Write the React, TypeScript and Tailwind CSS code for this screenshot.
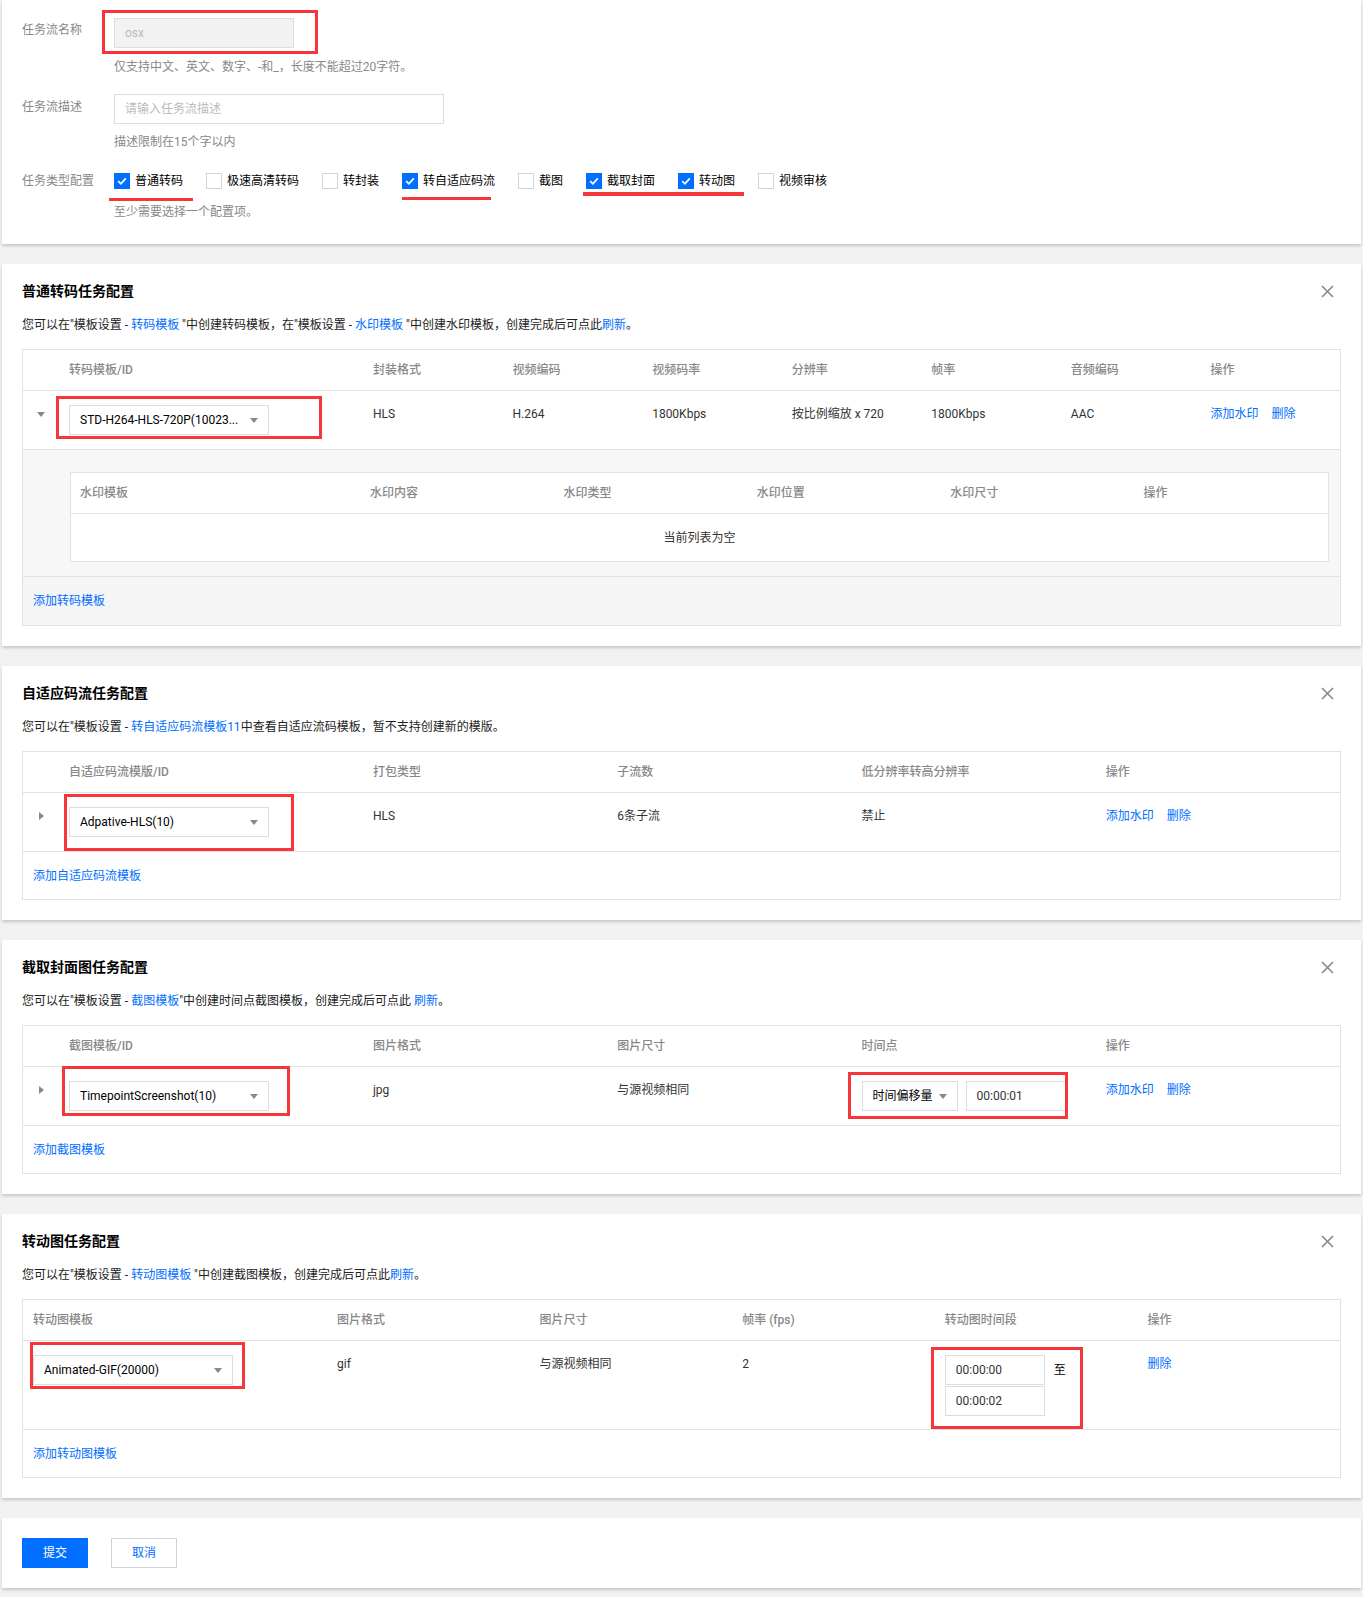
import React from "react";

// red annotation frame drawn over the form
function RedBox({ className }: { className: string }) {
  return <div className={"pointer-events-none absolute border-[3px] border-[#f5363b] " + className} />;
}

function Caret() {
  return (
    <svg width="8" height="5" viewBox="0 0 8 5" className="shrink-0">
      <polygon points="0,0 8,0 4,5" fill="#888" />
    </svg>
  );
}

function CloseIcon() {
  return (
    <svg width="13" height="13" viewBox="0 0 13 13" className="mr-[7px]">
      <path d="M1 1 L12 12 M12 1 L1 12" stroke="#888" strokeWidth="1.6" />
    </svg>
  );
}

function Select({ value, className }: { value: string; className: string }) {
  return (
    <div className={"flex h-[30px] items-center justify-between border border-[#ddd] bg-white pl-[10px] pr-[10px] text-black " + className}>
      <span className="truncate">{value}</span>
      <Caret />
    </div>
  );
}

function Checkbox({ label, checked, children }: { label: string; checked?: boolean; children?: React.ReactNode }) {
  return (
    <div className="relative flex h-[18px] items-center gap-[5px]">
      {checked ? (
        <span className="flex h-[16px] w-[16px] items-center justify-center bg-[#006eff]">
          <svg width="12" height="12" viewBox="0 0 12 12">
            <path d="M2.2 6.2 L4.9 8.8 L9.8 3.4" stroke="#fff" strokeWidth="1.8" fill="none" />
          </svg>
        </span>
      ) : (
        <span className="h-[16px] w-[16px] border border-[#cfd5de] bg-white" />
      )}
      <span className="text-black">{label}</span>
      {children}
    </div>
  );
}

function Link({ children }: { children: React.ReactNode }) {
  return <span className="text-[#006eff]">{children}</span>;
}

function Section({ title, desc, children }: { title: string; desc: React.ReactNode; children: React.ReactNode }) {
  return (
    <div className="bg-white px-[20px] pb-[20px] pt-[18px] shadow-[0_2px_3px_0_rgba(0,0,0,0.18)]">
      <div className="flex h-[18px] items-center justify-between">
        <h2 className="text-[14px] font-bold leading-[18px] text-black">{title}</h2>
        <CloseIcon />
      </div>
      <p className="mt-[16px] leading-[18px] text-[#222]">{desc}</p>
      {children}
    </div>
  );
}

function ExpandArrow({ open }: { open?: boolean }) {
  return (
    <div className="flex h-[18px] items-center justify-center">
      {open ? (
        <svg width="8" height="5" viewBox="0 0 8 5">
          <polygon points="0,0 8,0 4,5" fill="#888" />
        </svg>
      ) : (
        <svg width="5" height="8" viewBox="0 0 5 8">
          <polygon points="0,0 5,4 0,8" fill="#888" />
        </svg>
      )}
    </div>
  );
}

export default function App() {
  return (
    <div className="min-h-[1597px] bg-[#f2f2f2] px-[2px] pb-[9px] text-[12px] leading-[18px] text-[#333] font-['Roboto','Noto_Sans_CJK_SC',sans-serif]">
      <div className="flex flex-col gap-[20px]">
        {/* basic info */}
        <div className="relative bg-white px-[20px] pb-[23px] pt-[18px] shadow-[0_2px_3px_0_rgba(0,0,0,0.18)]">
          <div className="flex">
            <div className="w-[92px] pt-[3px] text-[#888]">任务流名称</div>
            <div>
              <div className="relative">
                <div className="flex h-[30px] w-[180px] items-center border border-[#ddd] bg-[#f2f2f2] pl-[10px] text-[#bbb]">osx</div>
                <RedBox className="left-[-12px] top-[-8px] h-[44px] w-[216px]" />
              </div>
              <p className="mt-[10px] text-[#888]">仅支持中文、英文、数字、-和_，长度不能超过20字符。</p>
            </div>
          </div>
          <div className="mt-[18px] flex">
            <div className="w-[92px] pt-[4px] text-[#888]">任务流描述</div>
            <div>
              <div className="flex h-[30px] w-[330px] items-center border border-[#ddd] bg-white pl-[10px] text-[#bbb]">请输入任务流描述</div>
              <p className="mt-[9px] text-[#888]">描述限制在15个字以内</p>
            </div>
          </div>
          <div className="mt-[21px] flex">
            <div className="w-[92px] text-[#888]">任务类型配置</div>
            <div>
              <div className="flex gap-[23px]">
                <Checkbox label="普通转码" checked>
                  <div className="absolute left-[-5px] top-[26px] h-[3px] w-[84px] bg-[#f5363b]" />
                </Checkbox>
                <Checkbox label="极速高清转码" />
                <Checkbox label="转封装" />
                <Checkbox label="转自适应码流" checked>
                  <div className="absolute left-0 top-[25px] h-[3px] w-[89px] bg-[#f5363b]" />
                </Checkbox>
                <Checkbox label="截图" />
                <Checkbox label="截取封面" checked>
                  <div className="absolute left-[-3px] top-[20px] h-[4px] w-[161px] bg-[#f5363b]" />
                </Checkbox>
                <Checkbox label="转动图" checked />
                <Checkbox label="视频审核" />
              </div>
              <p className="mt-[13px] text-[#888]">至少需要选择一个配置项。</p>
            </div>
          </div>
        </div>

        {/* 普通转码 */}
        <Section
          title="普通转码任务配置"
          desc={
            <>
              您可以在"模板设置 - <Link>转码模板</Link> "中创建转码模板，在"模板设置 - <Link>水印模板</Link> "中创建水印模板，创建完成后可点此<Link>刷新</Link>。
            </>
          }
        >
          <div className="mt-[15px] border border-[#e2e2e2]">
            <div className="grid h-[41px] grid-cols-[36px_304px_repeat(7,minmax(0,1fr))] items-center border-b border-[#e2e2e2] font-medium text-[#888]">
              <div />
              <div className="pl-[10px]">转码模板/ID</div>
              <div className="pl-[10px]">封装格式</div>
              <div className="pl-[10px]">视频编码</div>
              <div className="pl-[10px]">视频码率</div>
              <div className="pl-[10px]">分辨率</div>
              <div className="pl-[10px]">帧率</div>
              <div className="pl-[10px]">音频编码</div>
              <div className="pl-[10px]">操作</div>
            </div>
            <div className="grid h-[59px] grid-cols-[36px_304px_repeat(7,minmax(0,1fr))] border-b border-[#e2e2e2] pt-[14px]">
              <ExpandArrow open />
              <div className="pl-[10px]">
                <div className="relative w-[200px]">
                  <Select value="STD-H264-HLS-720P(10023..." className="w-[200px]" />
                  <RedBox className="left-[-13px] top-[-9px] h-[43px] w-[266px]" />
                </div>
              </div>
              <div className="pl-[10px]">HLS</div>
              <div className="pl-[10px]">H.264</div>
              <div className="pl-[10px]">1800Kbps</div>
              <div className="pl-[10px]">按比例缩放 x 720</div>
              <div className="pl-[10px]">1800Kbps</div>
              <div className="pl-[10px]">AAC</div>
              <div className="pl-[10px]">
                <Link>添加水印</Link>
                <span className="ml-[13px] text-[#006eff]">删除</span>
              </div>
            </div>
            <div className="border-b border-[#e2e2e2] bg-[#f7f7f7] pb-[14px] pl-[47px] pr-[11px] pt-[22px]">
              <div className="border border-[#e2e2e2] bg-white">
                <div className="grid h-[41px] grid-cols-[3fr_repeat(5,2fr)] items-center border-b border-[#e2e2e2] font-medium text-[#888]">
                  <div className="pl-[9px]">水印模板</div>
                  <div className="pl-[9px]">水印内容</div>
                  <div className="pl-[9px]">水印类型</div>
                  <div className="pl-[9px]">水印位置</div>
                  <div className="pl-[9px]">水印尺寸</div>
                  <div className="pl-[9px]">操作</div>
                </div>
                <div className="flex h-[47px] items-center justify-center text-[#333]">当前列表为空</div>
              </div>
            </div>
            <div className="flex h-[48px] items-center bg-[#f5f5f5] pl-[10px]">
              <Link>添加转码模板</Link>
            </div>
          </div>
        </Section>

        {/* 自适应码流 */}
        <Section
          title="自适应码流任务配置"
          desc={
            <>
              您可以在"模板设置 - <Link>转自适应码流模板11</Link>中查看自适应流码模板，暂不支持创建新的模版。
            </>
          }
        >
          <div className="mt-[15px] border border-[#e2e2e2]">
            <div className="grid h-[41px] grid-cols-[36px_304px_repeat(4,minmax(0,1fr))] items-center border-b border-[#e2e2e2] font-medium text-[#888]">
              <div />
              <div className="pl-[10px]">自适应码流模版/ID</div>
              <div className="pl-[10px]">打包类型</div>
              <div className="pl-[10px]">子流数</div>
              <div className="pl-[10px]">低分辨率转高分辨率</div>
              <div className="pl-[10px]">操作</div>
            </div>
            <div className="grid h-[59px] grid-cols-[36px_304px_repeat(4,minmax(0,1fr))] border-b border-[#e2e2e2] pt-[14px]">
              <ExpandArrow />
              <div className="pl-[10px]">
                <div className="relative w-[200px]">
                  <Select value="Adpative-HLS(10)" className="w-[200px]" />
                  <RedBox className="left-[-5px] top-[-13px] h-[57px] w-[230px]" />
                </div>
              </div>
              <div className="pl-[10px]">HLS</div>
              <div className="pl-[10px]">6条子流</div>
              <div className="pl-[10px]">禁止</div>
              <div className="pl-[10px]">
                <Link>添加水印</Link>
                <span className="ml-[13px] text-[#006eff]">删除</span>
              </div>
            </div>
            <div className="flex h-[47px] items-center pl-[10px]">
              <Link>添加自适应码流模板</Link>
            </div>
          </div>
        </Section>

        {/* 截取封面 */}
        <Section
          title="截取封面图任务配置"
          desc={
            <>
              您可以在"模板设置 - <Link>截图模板</Link>"中创建时间点截图模板，创建完成后可点此 <Link>刷新</Link>。
            </>
          }
        >
          <div className="mt-[15px] border border-[#e2e2e2]">
            <div className="grid h-[41px] grid-cols-[36px_304px_repeat(4,minmax(0,1fr))] items-center border-b border-[#e2e2e2] font-medium text-[#888]">
              <div />
              <div className="pl-[10px]">截图模板/ID</div>
              <div className="pl-[10px]">图片格式</div>
              <div className="pl-[10px]">图片尺寸</div>
              <div className="pl-[10px]">时间点</div>
              <div className="pl-[10px]">操作</div>
            </div>
            <div className="grid h-[59px] grid-cols-[36px_304px_repeat(4,minmax(0,1fr))] border-b border-[#e2e2e2] pt-[14px]">
              <ExpandArrow />
              <div className="pl-[10px]">
                <div className="relative w-[200px]">
                  <Select value="TimepointScreenshot(10)" className="w-[200px]" />
                  <RedBox className="left-[-7px] top-[-15px] h-[50px] w-[228px]" />
                </div>
              </div>
              <div className="pl-[10px]">jpg</div>
              <div className="pl-[10px]">与源视频相同</div>
              <div className="pl-[10px]">
                <div className="relative flex gap-[8px]">
                  <Select value="时间偏移量" className="w-[96px]" />
                  <div className="flex h-[30px] w-[100px] items-center border border-[#ddd] pl-[10px] text-[#333]">00:00:01</div>
                  <RedBox className="left-[-14px] top-[-9px] h-[47px] w-[220px]" />
                </div>
              </div>
              <div className="pl-[10px]">
                <Link>添加水印</Link>
                <span className="ml-[13px] text-[#006eff]">删除</span>
              </div>
            </div>
            <div className="flex h-[47px] items-center pl-[10px]">
              <Link>添加截图模板</Link>
            </div>
          </div>
        </Section>

        {/* 转动图 */}
        <Section
          title="转动图任务配置"
          desc={
            <>
              您可以在"模板设置 - <Link>转动图模板</Link> "中创建截图模板，创建完成后可点此<Link>刷新</Link>。
            </>
          }
        >
          <div className="mt-[15px] border border-[#e2e2e2]">
            <div className="grid h-[41px] grid-cols-[304px_repeat(5,minmax(0,1fr))] items-center border-b border-[#e2e2e2] font-medium text-[#888]">
              <div className="pl-[10px]">转动图模板</div>
              <div className="pl-[10px]">图片格式</div>
              <div className="pl-[10px]">图片尺寸</div>
              <div className="pl-[10px]">帧率 (fps)</div>
              <div className="pl-[10px]">转动图时间段</div>
              <div className="pl-[10px]">操作</div>
            </div>
            <div className="grid h-[89px] grid-cols-[304px_repeat(5,minmax(0,1fr))] border-b border-[#e2e2e2] pt-[14px]">
              <div className="pl-[10px]">
                <div className="relative w-[200px]">
                  <Select value="Animated-GIF(20000)" className="w-[200px]" />
                  <RedBox className="left-[-3px] top-[-13px] h-[47px] w-[215px]" />
                </div>
              </div>
              <div className="pl-[10px]">gif</div>
              <div className="pl-[10px]">与源视频相同</div>
              <div className="pl-[10px]">2</div>
              <div className="pl-[10px]">
                <div className="relative flex items-start gap-[9px]">
                  <div className="flex flex-col gap-[1px]">
                    <div className="flex h-[30px] w-[100px] items-center border border-[#ddd] pl-[10px] text-[#333]">00:00:00</div>
                    <div className="flex h-[30px] w-[100px] items-center border border-[#ddd] pl-[10px] text-[#333]">00:00:02</div>
                  </div>
                  <span className="mt-[6px] text-black">至</span>
                  <RedBox className="left-[-14px] top-[-8px] h-[82px] w-[152px]" />
                </div>
              </div>
              <div className="pl-[10px]">
                <Link>删除</Link>
              </div>
            </div>
            <div className="flex h-[47px] items-center pl-[10px]">
              <Link>添加转动图模板</Link>
            </div>
          </div>
        </Section>

        {/* actions */}
        <div className="flex gap-[23px] bg-white px-[20px] py-[20px] shadow-[0_2px_3px_0_rgba(0,0,0,0.18)]">
          <button className="h-[30px] w-[66px] bg-[#006eff] text-white">提交</button>
          <button className="h-[30px] w-[66px] border border-[#cfd5de] bg-white text-[#006eff]">取消</button>
        </div>
      </div>
    </div>
  );
}
